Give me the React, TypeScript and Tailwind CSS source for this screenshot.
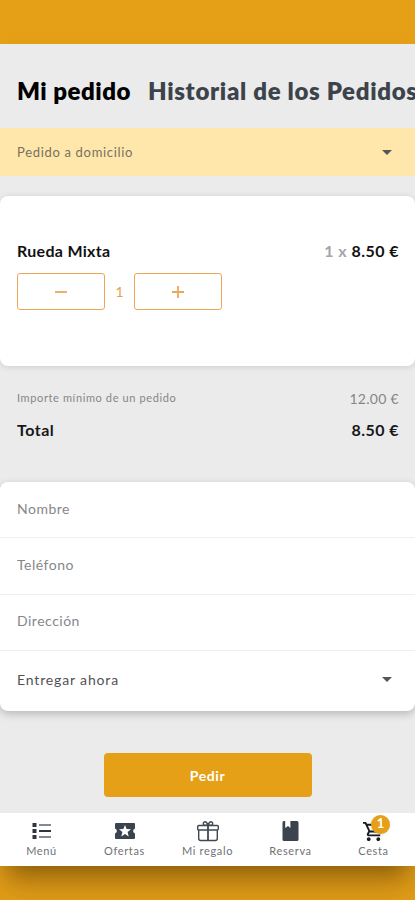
import { ReactNode } from "react";
import { MdOutlineShoppingCart } from "react-icons/md";

function Caret() {
  return (
    <svg viewBox="0 0 10 5" className="mr-[6px] h-[5px] w-[10px] fill-[#55565a]">
      <path d="M0 0h10L5 5z" />
    </svg>
  );
}

function ListIcon() {
  return (
    <svg viewBox="0 0 20 18" className="h-[18px] w-5">
      <path fill="#30353f" d="M.5 1h4v4h-4zM.5 7h4v4h-4zM.5 13h4v4h-4zM7 8h12v2H7z" />
      <path fill="#858a90" d="M7 2h12v2H7zM7 14h12v2H7z" />
    </svg>
  );
}

function TicketIcon() {
  return (
    <svg viewBox="0 0 20 16" className="h-4 w-5">
      <path fill="#3b434e" d="M1 0h18q1 0 1 1v4.500a2.600 2.600 0 0 0 0 5V15q0 1-1 1H1q-1 0-1-1v-4.500a2.600 2.600 0 0 0 0-5V1q0-1 1-1z" />
      <path fill="#fff" d="m10 2 1.600 4.100 4.400.2-3.400 2.800 1.100 4.300L10 11l-3.700 2.400 1.100-4.300L4 6.300l4.400-.2z" />
    </svg>
  );
}

function GiftIcon() {
  return (
    <svg viewBox="0 0 24 22" fill="none" stroke="#414850" strokeWidth="1.4" className="h-[22px] w-6">
      <rect x="1.700" y="5.500" width="20.600" height="4.500" rx="1" />
      <path d="M2.700 10v8.500q0 2 2 2h14.600q2 0 2-2V10" />
      <path strokeWidth="1.800" d="M12 5.500v15" />
      <path d="M11 5.300H7.500C7 3.500 7.500 1.800 9 1.700s2.300 1.600 3 3.300c.7-1.700 1.500-3.400 3-3.300s2 1.800 1.500 3.600H13" />
    </svg>
  );
}

function BookIcon() {
  return (
    <svg viewBox="0 0 17 20" className="h-5 w-[17px] fill-[#3b434e]">
      <path d="M2 0h1.200v7L6 5l2.400 2V0H15q1.500 0 1.500 1.500v17Q16.500 20 15 20H2Q.5 20 .5 18.500v-17Q.5 0 2 0z" />
    </svg>
  );
}

function QtyButton({ label, children }: { label: string; children: ReactNode }) {
  return (
    <button aria-label={label} className="flex h-[37px] w-[88px] items-center justify-center rounded-[3px] border border-[#eda655]">
      <svg viewBox="0 0 12 12" className="h-3 w-3" stroke="#eba75a" strokeWidth="1.8">
        {children}
      </svg>
    </button>
  );
}

function Field({ label }: { label: string }) {
  return (
    <div className="flex h-[56.3px] items-center border-b border-[#efefef] px-[17px] pb-[3px] text-[14px] tracking-[0.5px] text-[#85878a]">
      {label}
    </div>
  );
}

function NavItem({ label, children }: { label: string; children: ReactNode }) {
  return (
    <div className="flex w-[83px] flex-col items-center pt-[6px]">
      <div className="flex h-6 items-center">{children}</div>
      <span className="text-[11px] leading-[16px] tracking-[0.65px] text-[#707276]">{label}</span>
    </div>
  );
}

export default function App() {
  return (
    <div className="h-[900px] w-full overflow-hidden bg-[#e5a018] font-[Lato,sans-serif]">
      <div className="h-[44px]" />
      <div className="flex h-[822px] flex-col bg-[#ebebeb] shadow-[0_16px_24px_-8px_rgba(60,35,0,0.5),0_30px_30px_0px_rgba(80,50,0,0.12)]">
        <div className="flex h-[84px] shrink-0 items-center gap-[17px] overflow-hidden whitespace-nowrap pb-[1px] pt-[11px] pl-[17px] text-[24px] font-extrabold">
          <h1 className="w-[114px] tracking-[0.5px] text-black">Mi pedido</h1>
          <h1 className="tracking-[0.68px] text-[#3c434b]">Historial de los Pedidos</h1>
        </div>
        <div className="flex h-[48px] shrink-0 items-center justify-between bg-[#ffe7ab] px-[17px] pt-[1px] text-[13px] tracking-[0.68px] text-[#77705f]">
          Pedido a domicilio
          <Caret />
        </div>

        <div className="mt-[20px] h-[170px] shrink-0 rounded-lg bg-white pl-[17px] pr-[16px] pt-[44px] shadow-[0_1px_6px_rgba(0,0,0,0.13)]">
          <div className="flex h-[22px] items-center justify-between text-[16px] font-bold text-[#111]">
            <span className="tracking-[0.3px]">Rueda Mixta</span>
            <span className="tracking-[0.45px]">
              <span className="text-[#a5a5a5]">1 x</span> 8.50 €
            </span>
          </div>
          <div className="mt-[11px] flex items-center">
            <QtyButton label="Quitar">
              <path d="M0 6h12" />
            </QtyButton>
            <span className="w-[29px] text-center text-[14px] text-[#e5a24a]">1</span>
            <QtyButton label="Añadir">
              <path d="M0 6h12M6 0v12" />
            </QtyButton>
          </div>
        </div>

        <div className="h-[116px] shrink-0 pl-[17px] pr-[16px] pt-[21px]">
          <div className="flex h-[22px] items-center justify-between text-[#85868a]">
            <span className="text-[11px] tracking-[0.62px]">Importe mínimo de un pedido</span>
            <span className="text-[14px] tracking-[0.3px]">12.00 €</span>
          </div>
          <div className="mt-[10px] flex h-[22px] items-center justify-between text-[16px] font-bold text-[#16171a]">
            <span className="tracking-[0.5px]">Total</span>
            <span className="tracking-[0.45px]">8.50 €</span>
          </div>
        </div>

        <div className="h-[229px] shrink-0 rounded-lg bg-white shadow-[0_3px_8px_rgba(0,0,0,0.22)]">
          <Field label="Nombre" />
          <Field label="Teléfono" />
          <Field label="Dirección" />
          <div className="flex h-[57px] items-center justify-between px-[17px] text-[14px] tracking-[0.85px] text-[#505256]">
            Entregar ahora
            <Caret />
          </div>
        </div>

        <button className="mx-auto mt-[42px] h-[44px] w-[208px] shrink-0 rounded bg-[#e5a018] text-[14px] font-bold tracking-[0.6px] text-white">
          Pedir
        </button>

        <nav className="mt-auto flex h-[53px] shrink-0 bg-white">
          <NavItem label="Menú">
            <ListIcon />
          </NavItem>
          <NavItem label="Ofertas">
            <TicketIcon />
          </NavItem>
          <NavItem label="Mi regalo">
            <GiftIcon />
          </NavItem>
          <NavItem label="Reserva">
            <BookIcon />
          </NavItem>
          <NavItem label="Cesta">
            <div className="relative text-[#191b1f]">
              <MdOutlineShoppingCart size={23} />
              <span className="absolute -top-[5px] left-[9px] flex h-[19px] w-[19px] items-center justify-center rounded-full bg-[#e5a018] text-[13px] font-bold text-white shadow-sm">
                1
              </span>
            </div>
          </NavItem>
        </nav>
      </div>
    </div>
  );
}
